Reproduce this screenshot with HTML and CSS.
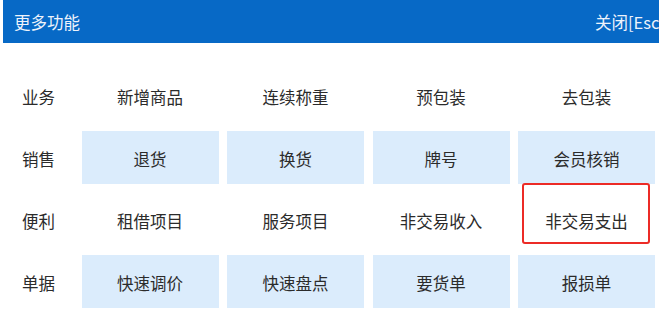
FILE: index.html
```html
<!DOCTYPE html>
<html lang="zh-CN">
<head>
<meta charset="utf-8">
<title>更多功能</title>
<link rel="stylesheet" href="styles.css">
</head>
<body>
<div class="dialog">
  <div class="header">
    <span class="title">更多功能</span>
    <span class="close">关闭[Esc]</span>
  </div>
  <div class="grid">
    <div class="label">业务</div>
    <div class="item">新增商品</div>
    <div class="item">连续称重</div>
    <div class="item">预包装</div>
    <div class="item">去包装</div>

    <div class="label">销售</div>
    <div class="item btn">退货</div>
    <div class="item btn">换货</div>
    <div class="item btn">牌号</div>
    <div class="item btn">会员核销</div>

    <div class="label">便利</div>
    <div class="item">租借项目</div>
    <div class="item">服务项目</div>
    <div class="item">非交易收入</div>
    <div class="item marked">非交易支出<span class="highlight"></span></div>

    <div class="label">单据</div>
    <div class="item btn">快速调价</div>
    <div class="item btn">快速盘点</div>
    <div class="item btn">要货单</div>
    <div class="item btn">报损单</div>
  </div>
</div>
</body>
</html>
```

FILE: styles.css
```css
html, body {
  margin: 0;
  padding: 0;
  background: #ffffff;
  overflow: hidden;
}

body {
  width: 659px;
  height: 317px;
  font-family: "Noto Sans CJK SC", "Noto Sans", sans-serif;
  color: #2b2b2b;
}

.dialog {
  margin-left: 3px;
  width: 701px;
}

.header {
  height: 43px;
  background: #0769c6;
  color: #eef3fb;
  display: flex;
  align-items: center;
  justify-content: space-between;
  padding: 0 14px 0 11px;
  font-size: 16.5px;
  box-sizing: border-box;
  white-space: nowrap;
}

.title {
  padding-top: 1px;
}

.close {
  width: 95px;
  padding-top: 1px;
  overflow: hidden;
}

.grid {
  display: grid;
  grid-template-columns: 51px repeat(4, 137px);
  grid-auto-rows: 53px;
  column-gap: 8.5px;
  row-gap: 9px;
  padding: 26px 0 0 19px;
  font-size: 16.5px;
}

.label,
.item {
  display: flex;
  align-items: center;
  padding-top: 3px;
  box-sizing: border-box;
  white-space: nowrap;
}

.item {
  justify-content: center;
  position: relative;
}

.btn {
  background: #dbecfc;
}

.highlight {
  position: absolute;
  left: 4px;
  top: -10px;
  width: 128px;
  height: 61px;
  box-sizing: border-box;
  border: 2px solid #ec2b26;
  border-radius: 3px;
}
```
